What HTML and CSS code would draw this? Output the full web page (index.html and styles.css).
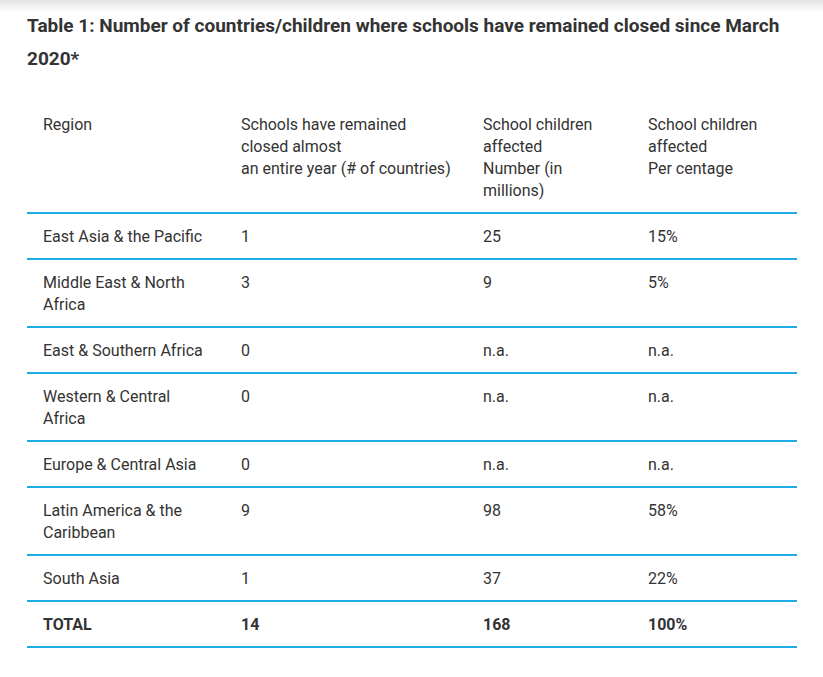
FILE: index.html
```html
<!DOCTYPE html>
<html lang="en">
<head>
<meta charset="utf-8">
<title>Table 1</title>
<link rel="stylesheet" href="styles.css">
</head>
<body>
<div class="topshade"></div>
<main class="content">
  <h3 class="caption">Table 1: Number of countries/children where schools have remained closed since March 2020*</h3>
  <table class="data">
    <colgroup>
      <col class="c1"><col class="c2"><col class="c3"><col class="c4">
    </colgroup>
    <thead>
      <tr>
        <th>Region</th>
        <th>Schools have remained<br>closed almost<br>an entire year (# of countries)</th>
        <th>School children<br>affected<br>Number (in<br>millions)</th>
        <th>School children<br>affected<br>Per centage</th>
      </tr>
    </thead>
    <tbody>
      <tr><td>East Asia &amp; the Pacific</td><td>1</td><td>25</td><td>15%</td></tr>
      <tr><td>Middle East &amp; North Africa</td><td>3</td><td>9</td><td>5%</td></tr>
      <tr><td>East &amp; Southern Africa</td><td>0</td><td>n.a.</td><td>n.a.</td></tr>
      <tr><td>Western &amp; Central Africa</td><td>0</td><td>n.a.</td><td>n.a.</td></tr>
      <tr><td>Europe &amp; Central Asia</td><td>0</td><td>n.a.</td><td>n.a.</td></tr>
      <tr><td>Latin America &amp; the Caribbean</td><td>9</td><td>98</td><td>58%</td></tr>
      <tr><td>South Asia</td><td>1</td><td>37</td><td>22%</td></tr>
      <tr class="total"><td>TOTAL</td><td>14</td><td>168</td><td>100%</td></tr>
    </tbody>
  </table>
</main>
</body>
</html>
```
FILE: styles.css
```css
html, body {
  margin: 0;
  padding: 0;
  background: #ffffff;
}
body {
  font-family: Roboto, "Liberation Sans", Arial, sans-serif;
  color: #333333;
  position: relative;
}
.topshade {
  position: absolute;
  top: 0;
  left: 0;
  right: 0;
  height: 12px;
  background: linear-gradient(to bottom, #e4e4e4, rgba(255,255,255,0));
}
.content {
  padding: 9px 26px 0 27px;
}
.caption {
  margin: 0 0 27px 0;
  font-size: 19px;
  line-height: 33px;
  font-weight: 700;
  color: #333333;
}
.data {
  width: 770px;
  border-collapse: collapse;
  table-layout: fixed;
  font-size: 16px;
  line-height: 22px;
}
.c1 { width: 198px; }
.c2 { width: 242px; }
.c3 { width: 165px; }
.c4 { width: 165px; }
.data th,
.data td {
  text-align: left;
  vertical-align: top;
  font-weight: 400;
  padding: 12px 16px 10px 16px;
  border-bottom: 2px solid #1cabe2;
}
.data th {
  padding-right: 8px;
}
.data .total td {
  font-weight: 700;
}
```
